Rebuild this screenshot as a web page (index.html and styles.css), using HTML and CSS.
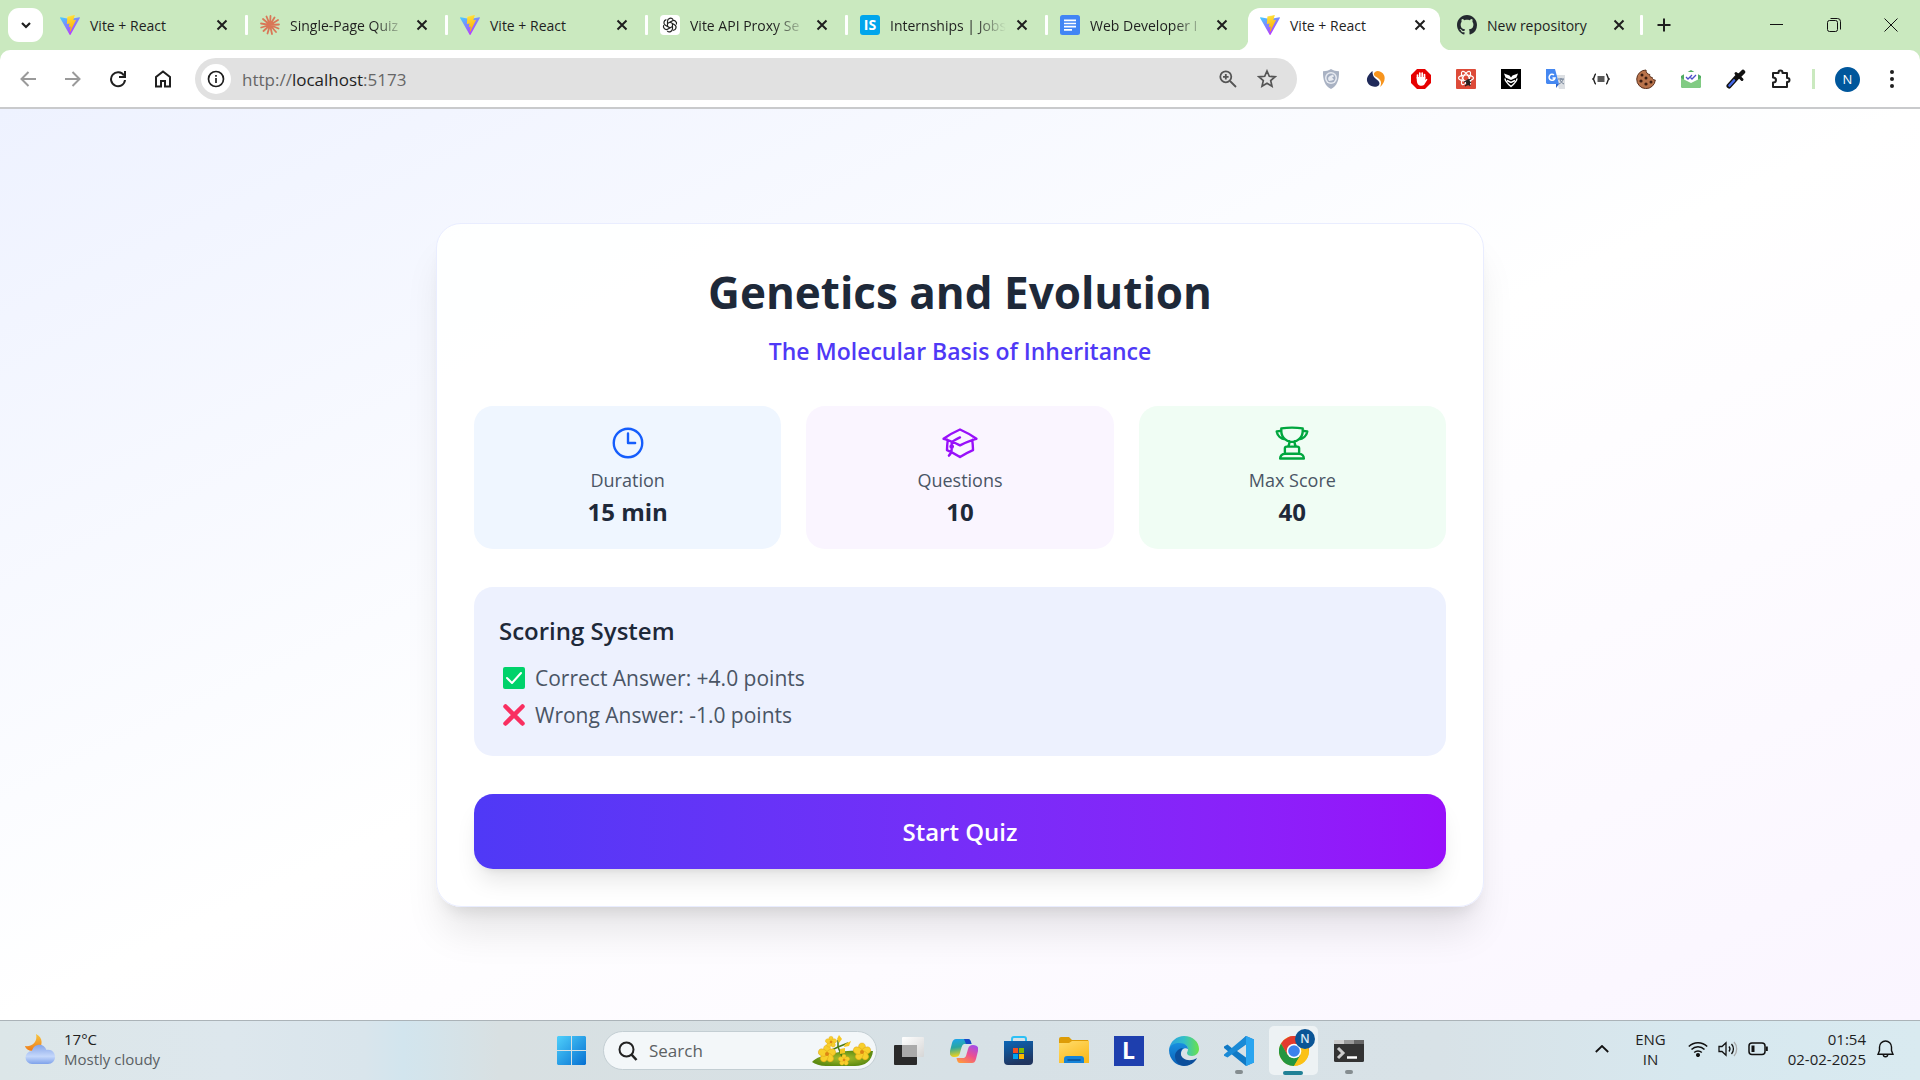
FILE: index.html
```
<!DOCTYPE html>
<html lang="en">
<head>
<meta charset="utf-8">
<meta name="viewport" content="width=device-width, initial-scale=1">
<title>Vite + React</title>
<link rel="stylesheet" href="styles.css">
</head>
<body>
<svg class="defs" aria-hidden="true">
  <defs>
    <linearGradient id="vite-a" x1="0" y1="0" x2=".6" y2="1"><stop offset="0" stop-color="#41d1ff"/><stop offset="1" stop-color="#bd34fe"/></linearGradient>
    <linearGradient id="vite-b" x1=".4" y1="0" x2=".6" y2="1"><stop offset="0" stop-color="#ffea83"/><stop offset=".1" stop-color="#ffdd35"/><stop offset="1" stop-color="#ffa800"/></linearGradient>
    <symbol id="vite" viewBox="0 0 256 257">
      <path fill="url(#vite-a)" d="M255.153 37.938 134.897 252.976c-2.483 4.44-8.862 4.466-11.382.048L.875 37.958c-2.746-4.814 1.371-10.646 6.827-9.67l120.385 21.517a6.537 6.537 0 0 0 2.322-.004l117.867-21.483c5.438-.991 9.574 4.796 6.877 9.62Z"/>
      <path fill="url(#vite-b)" d="M185.432.063 96.44 17.501a3.268 3.268 0 0 0-2.634 3.014l-5.474 92.456a3.268 3.268 0 0 0 3.997 3.378l24.777-5.718c2.318-.535 4.413 1.507 3.936 3.838l-7.361 36.047c-.495 2.426 1.782 4.5 4.151 3.78l15.304-4.649c2.372-.72 4.652 1.36 4.15 3.788l-11.698 56.621c-.732 3.542 3.979 5.473 5.943 2.437l1.313-2.028 72.516-144.72c1.215-2.423-.88-5.186-3.54-4.672l-25.505 4.922c-2.396.462-4.435-1.77-3.759-4.114l16.646-57.705c.677-2.35-1.37-4.583-3.769-4.113Z"/>
    </symbol>
    <symbol id="close" viewBox="0 0 12 12"><path d="M1.5 1.5l9 9M10.500 1.500l-9 9" fill="none" stroke="#1f1f1f" stroke-width="2"/></symbol>
  </defs>
</svg>

<header class="browser">
  <div class="tab-strip">
    <button class="tab-search" aria-label="Search tabs"><svg width="12" height="12" viewBox="0 0 12 12"><path d="M2 4l4 4 4-4" fill="none" stroke="#1f1f1f" stroke-width="2.200"/></svg></button>
    <div class="tab"><svg class="favicon"><use href="#vite"/></svg><span class="tab-title">Vite + React</span><button class="tab-close" aria-label="Close tab"><svg width="12" height="12"><use href="#close"/></svg></button></div>
    <div class="tab"><svg class="favicon" viewBox="0 0 20 20"><g stroke="#d97757" stroke-width="1.800" stroke-linecap="round"><path d="M10 10L10.500 1M10 10l4.500-7.500M10 10l8-5M10 10l9-.5M10 10l8.500 3.500M10 10l6 7M10 10l2 9M10 10l-2.500 8.500M10 10l-6.500 6M10 10l-8.800 2.500M10 10L1 8.500M10 10L3 4M10 10L6.500 1.500"/></g></svg><span class="tab-title faded">Single-Page Quiz</span><button class="tab-close" aria-label="Close tab"><svg width="12" height="12"><use href="#close"/></svg></button></div>
    <div class="tab"><svg class="favicon"><use href="#vite"/></svg><span class="tab-title">Vite + React</span><button class="tab-close" aria-label="Close tab"><svg width="12" height="12"><use href="#close"/></svg></button></div>
    <div class="tab"><svg class="favicon" viewBox="0 0 20 20"><rect width="20" height="20" rx="4" fill="#fff"/><g fill="none" stroke="#222" stroke-width="1.200"><path d="M7.500 11.500V6.200a3 3 0 0 1 5.600-1.500M7.500 8.600l4.600-2.700a3 3 0 0 1 4.300 3.600"/><path d="M7.500 11.500V6.200a3 3 0 0 1 5.600-1.500M7.500 8.600l4.600-2.700a3 3 0 0 1 4.300 3.600" transform="rotate(120 10 10)"/><path d="M7.500 11.500V6.200a3 3 0 0 1 5.600-1.500M7.500 8.600l4.600-2.700a3 3 0 0 1 4.300 3.600" transform="rotate(240 10 10)"/></g></svg><span class="tab-title faded">Vite API Proxy Se</span><button class="tab-close" aria-label="Close tab"><svg width="12" height="12"><use href="#close"/></svg></button></div>
    <div class="tab"><span class="favicon favicon-is">IS</span><span class="tab-title faded">Internships | Jobs</span><button class="tab-close" aria-label="Close tab"><svg width="12" height="12"><use href="#close"/></svg></button></div>
    <div class="tab no-line"><svg class="favicon" viewBox="0 0 20 20"><rect width="20" height="20" rx="2.500" fill="#4285f4"/><path d="M4 5.300h12M4 8.500h12M4 11.700h12M4 14.900h8" stroke="#fff" stroke-width="1.700"/></svg><span class="tab-title faded">Web Developer I</span><button class="tab-close" aria-label="Close tab"><svg width="12" height="12"><use href="#close"/></svg></button></div>
    <div class="tab active"><svg class="favicon"><use href="#vite"/></svg><span class="tab-title">Vite + React</span><button class="tab-close" aria-label="Close tab"><svg width="12" height="12"><use href="#close"/></svg></button></div>
    <div class="tab last"><svg class="favicon" viewBox="0 0 16 16"><path fill="#24292f" d="M8 0C3.580 0 0 3.580 0 8c0 3.540 2.290 6.530 5.470 7.590.4.070.55-.17.55-.38 0-.19-.01-.82-.01-1.490-2.010.37-2.530-.49-2.690-.94-.09-.23-.48-.94-.82-1.130-.28-.15-.68-.52-.01-.53.63-.01 1.080.58 1.230.82.72 1.210 1.870.87 2.330.66.070-.52.28-.87.51-1.070-1.780-.2-3.640-.89-3.640-3.950 0-.87.31-1.590.82-2.150-.08-.2-.36-1.020.08-2.120 0 0 .67-.21 2.200.82.64-.18 1.320-.27 2-.27s1.360.09 2 .27c1.530-1.040 2.200-.82 2.200-.82.44 1.100.16 1.920.08 2.120.51.56.82 1.270.82 2.150 0 3.070-1.870 3.750-3.650 3.950.29.25.54.73.54 1.480 0 1.070-.01 1.930-.01 2.200 0 .21.15.46.55.38A8.010 8.010 0 0 0 16 8c0-4.420-3.580-8-8-8z"/></svg><span class="tab-title">New repository</span><button class="tab-close" aria-label="Close tab"><svg width="12" height="12"><use href="#close"/></svg></button></div>
    <button class="new-tab" aria-label="New tab"><svg width="14" height="14"><path d="M7 0.500v13M.5 7h13" stroke="#1f1f1f" stroke-width="2"/></svg></button>
    <div class="window-controls">
      <button aria-label="Minimise"><svg width="14" height="14"><path d="M0 6.500h13" stroke="#111"/></svg></button>
      <button aria-label="Restore"><svg width="14" height="14" fill="none" stroke="#111"><rect x=".5" y="2.500" width="10" height="11" rx="2"/><path d="M3.500 .5h7a3 3 0 0 1 3 3v8"/></svg></button>
      <button aria-label="Close"><svg width="14" height="14"><path d="M.5.5l13 13M13.500.5l-13 13" stroke="#111"/></svg></button>
    </div>
  </div>

  <div class="toolbar">
    <nav class="nav-buttons" aria-label="Navigation">
      <button aria-label="Back"><svg width="16" height="16" fill="none" stroke="#9a9a9a" stroke-width="2"><path d="M16 8H2M8.500 1L1.500 8l7 7"/></svg></button>
      <button aria-label="Forward"><svg width="16" height="16" fill="none" stroke="#9a9a9a" stroke-width="2"><path d="M0 8h14M7.500 1l7 7-7 7"/></svg></button>
      <button aria-label="Reload"><svg width="18" height="18" fill="none" stroke="#1f1f1f" stroke-width="2"><path d="M15 5.500A7 7 0 1 0 16 10"/><path d="M16 1v6h-6"/></svg></button>
      <button aria-label="Home"><svg width="18" height="18" fill="none" stroke="#1f1f1f" stroke-width="2"><path d="M2 16.500V7l7-5.500L16 7v9.500h-5V11H7v5.500z"/></svg></button>
    </nav>
    <div class="omnibox">
      <button class="site-info" aria-label="Site information"><svg width="18" height="18" fill="none" stroke="#1f1f1f" stroke-width="1.700"><circle cx="9" cy="9" r="7.500"/><path d="M9 8v5M9 5v1.800"/></svg></button>
      <a class="url" href="http://localhost:5173">http://<span>localhost</span>:5173</a>
      <button aria-label="Zoom"><svg width="18" height="18" fill="none" stroke="#555" stroke-width="1.800"><circle cx="6.800" cy="6.800" r="5.500"/><path d="M11 11l6 6M6.800 4v5.600M4 6.800h5.600"/></svg></button>
      <button aria-label="Bookmark"><svg width="20" height="20" fill="none" stroke="#555" stroke-width="1.700"><path d="M10 2l2.300 5.300 5.700.5-4.300 3.800 1.300 5.700-5-3-5 3 1.300-5.700L2 7.800l5.700-.5z"/></svg></button>
    </div>
    <div class="extensions">
      <button aria-label="Privacy shield"><svg width="20" height="20"><path d="M10 0c2.500 1.600 5 2.200 8 2.200C18.300 11 16 17 10 20 4 17 1.700 11 2 2.200 5 2.200 7.500 1.600 10 0z" fill="#a9b2c3"/><circle cx="10" cy="9" r="6" fill="#e8ebf1"/><circle cx="10" cy="9" r="4.500" fill="#a3adc0"/><path d="M8 12c-2-3 0-5 2-5.500l2-1 1 2-2 1 2 2-2 1z" fill="#e8ebf1"/></svg></button>
      <button aria-label="Traffic insights"><svg width="20" height="20"><path d="M6.500 2C3 5-1.500 10 2.500 15c3 3.500 9 3.500 10.500 1 1.500-3-1-4.500-3.500-6.500S6.500 5 6.500 2z" fill="#1f2a5a"/><path d="M8 4.500C9 1 14 1 17 4.500c3.500 4.500 1 10-3 13.500 2-4 1-6.500-1.500-8.500S7.300 7 8 4.500z" fill="#f7941d"/></svg></button>
      <button aria-label="Ad blocker"><svg width="20" height="20"><path d="M6 0h8l6 6v8l-6 6H6l-6-6V6z" fill="#e60000"/><path d="M6.500 9V6M8.800 8V4.200M11.200 8V4M13.500 9V5.500" stroke="#fff" stroke-width="1.700" stroke-linecap="round"/><path d="M5.700 8h8.600v3l1.200-1.200 1 .8-3.500 5.400c-1.500 1.200-4.500 1-6-.5-1.300-1.500-1.300-4.500-1.300-7.500z" fill="#fff"/></svg></button>
      <button aria-label="React inspector"><svg width="20" height="20"><rect width="20" height="20" rx="1" fill="#dd4b39"/><g fill="none" stroke="#fff" stroke-width="1.200"><ellipse cx="10" cy="9" rx="7.500" ry="3"/><ellipse cx="10" cy="9" rx="7.500" ry="3" transform="rotate(60 10 9)"/><ellipse cx="10" cy="9" rx="7.500" ry="3" transform="rotate(120 10 9)"/></g><path d="M8 13l7-3M9 17l6-4M12 10l2 7" stroke="#222" stroke-width="1.200"/><ellipse cx="12" cy="13.500" rx="2" ry="3" fill="#222"/></svg></button>
      <button aria-label="Owl"><svg width="20" height="20"><path fill="#000" d="M0 0h20v20H0z"/><path d="M3 4.500l5.500 2L10 8.500l1.500-2 5.500-2-1.500 4L10 11 4.500 8.500z" fill="#fff"/><path d="M4 9.500c0 3 3 5.500 6 8 3-2.500 6-5 6-8M6 11.500l4 2 4-2" fill="none" stroke="#fff" stroke-width="1.400"/></svg></button>
      <button aria-label="Translate"><svg width="20" height="20"><path d="M9 6h10v14h-6z" fill="#dcdfe3"/><path d="M12 10h6M15 9v2M17 10c0 2-2 4-4 5M14 11c1 2 2 3 4 4" fill="none" stroke="#718096"/><path d="M0 0h9l4 15H1l-1-1z" fill="#4688f1"/><path d="M10 15h3l-3 4z" fill="#2c62c8"/><path d="M8 6a3 3 0 1 0 1 3H6.500" fill="none" stroke="#fff" stroke-width="1.500"/></svg></button>
      <button aria-label="JSON formatter"><svg width="18" height="12" fill="none" stroke="#222" stroke-width="1.400"><path d="M4 1C2 1 3 5 1 6c2 1 1 5 3 5M14 1c2 0 1 4 3 5-2 1-1 5-3 5M5.500 4h7M5.500 6h7M5.500 8h7"/></svg></button>
      <button aria-label="Cookie editor"><svg width="20" height="20"><path d="M10 1a9.300 9.300 0 1 0 9.300 10c-2 .3-3-1-3-2.500-2 0-3-1.500-2.500-3C11 5.500 10 3 10 1z" fill="#b9734b" stroke="#5a2f1c"/><g fill="#3a1c12"><circle cx="6" cy="6" r="1.500"/><circle cx="5" cy="12" r="1.600"/><circle cx="10" cy="9" r="1.500"/><circle cx="10" cy="15" r="1.600"/><circle cx="15" cy="13" r="1.500"/></g></svg></button>
      <button aria-label="Mail tracker"><svg width="20" height="20"><path d="M0 7l10-6 10 6v10a2 2 0 0 1-2 2H2a2 2 0 0 1-2-2z" fill="#50ad62"/><path d="M3 3h14v11H3z" fill="#fff"/><path d="M0 9l10 5 10-5v8a2 2 0 0 1-2 2H2a2 2 0 0 1-2-2z" fill="#81cb83"/><path d="M5 8l2 2 4-4M9 8l2 2 4-4" fill="none" stroke="#4b4fc9" stroke-width="1.300"/></svg></button>
      <button aria-label="Colour picker"><svg width="20" height="20"><path d="M3 17L12 7" stroke="#111" stroke-width="5" stroke-linecap="round"/><path d="M3.500 16.500L8 11.500" stroke="#4468e8" stroke-width="2.600" stroke-linecap="round"/><path d="M10 4.500l6 6" stroke="#111" stroke-width="3" stroke-linecap="round"/><path d="M13.500 6.500L17 3" stroke="#111" stroke-width="4.500" stroke-linecap="round"/></svg></button>
      <button aria-label="Extensions"><svg width="20" height="20" fill="none" stroke="#1f1f1f" stroke-width="2"><path d="M2 4h5.500V3.500a2 2 0 0 1 4 0V4H16v5h.5a2 2 0 0 1 0 4H16v5H2v-4.500c4 0 4-5 0-5z" stroke-linejoin="round"/></svg></button>
    </div>
    <span class="divider"></span>
    <button class="avatar" aria-label="Profile">N</button>
    <button class="menu" aria-label="Menu"><svg width="4" height="18" fill="#1f1f1f"><circle cx="2" cy="2" r="2"/><circle cx="2" cy="9" r="2"/><circle cx="2" cy="16" r="2"/></svg></button>
  </div>
</header>

<main class="page">
  <section class="card">
    <h1>Genetics and Evolution</h1>
    <p class="topic">The Molecular Basis of Inheritance</p>
    <div class="stats">
      <div class="stat stat-blue">
        <svg viewBox="0 0 24 24"><path d="M12 6v6h4.500m4.500 0a9 9 0 1 1-18 0 9 9 0 0 1 18 0Z"/></svg>
        <p class="stat-label">Duration</p><p class="stat-value">15 min</p>
      </div>
      <div class="stat stat-purple">
        <svg viewBox="0 0 24 24"><path d="M4.260 10.147a60.438 60.438 0 0 0-.491 6.347A48.620 48.620 0 0 1 12 20.904a48.620 48.620 0 0 1 8.232-4.410 60.460 60.460 0 0 0-.491-6.347m-15.482 0a50.636 50.636 0 0 0-2.658-.813A59.906 59.906 0 0 1 12 3.493a59.903 59.903 0 0 1 10.399 5.840c-.896.248-1.783.52-2.658.814m-15.482 0A50.717 50.717 0 0 1 12 13.489a50.702 50.702 0 0 1 7.740-3.342M6.750 15a.75.75 0 1 0 0-1.500.75.75 0 0 0 0 1.500Zm0 0v-3.675A55.378 55.378 0 0 1 12 8.443m-7.007 11.550A5.981 5.981 0 0 0 6.750 15.750v-1.500"/></svg>
        <p class="stat-label">Questions</p><p class="stat-value">10</p>
      </div>
      <div class="stat stat-green">
        <svg viewBox="0 0 24 24"><path d="M16.500 18.750h-9m9 0a3 3 0 0 1 3 3h-15a3 3 0 0 1 3-3m9 0v-3.375c0-.621-.503-1.125-1.125-1.125h-.871M7.500 18.750v-3.375c0-.621.504-1.125 1.125-1.125h.872m5.007 0H9.497m5.007 0a7.454 7.454 0 0 1-.982-3.172M9.497 14.250a7.454 7.454 0 0 0 .981-3.172M5.250 4.236c-.982.143-1.954.317-2.916.52A6.003 6.003 0 0 0 7.730 9.728M5.250 4.236V4.500c0 2.108.966 3.990 2.480 5.228M5.250 4.236V2.721C7.456 2.410 9.710 2.250 12 2.250c2.291 0 4.545.16 6.750.47v1.516M7.730 9.728a6.726 6.726 0 0 0 2.748 1.350m8.272-6.842V4.500c0 2.108-.966 3.990-2.480 5.228m2.480-5.492a46.320 46.320 0 0 1 2.916.52 6.003 6.003 0 0 1-5.395 4.972m0 0a6.726 6.726 0 0 1-2.749 1.350m0 0a6.772 6.772 0 0 1-3.044 0"/></svg>
        <p class="stat-label">Max Score</p><p class="stat-value">40</p>
      </div>
    </div>
    <div class="scoring">
      <h2>Scoring System</h2>
      <ul>
        <li><svg viewBox="0 0 22 22"><rect width="22" height="22" rx="2" fill="#00d26a"/><path d="M4 11l5 5 9-10" fill="none" stroke="#fff" stroke-width="2" stroke-linecap="round" stroke-linejoin="round"/></svg>Correct Answer: +4.0 points</li>
        <li><svg viewBox="0 0 22 22"><path d="M2.500 2.500l17 17M19.500 2.500l-17 17" fill="none" stroke="#f92f60" stroke-width="4.500" stroke-linecap="round"/></svg>Wrong Answer: -1.0 points</li>
      </ul>
    </div>
    <button class="start">Start Quiz</button>
  </section>
</main>

<footer class="taskbar">
  <button class="weather">
    <svg width="30" height="30"><defs><linearGradient id="cloud" x2="0" y2="1"><stop offset="0" stop-color="#86a5e8"/><stop offset=".6" stop-color="#c5d8fb"/><stop offset="1" stop-color="#7fa2ea"/></linearGradient><linearGradient id="moon" x2="0" y2="1"><stop offset="0" stop-color="#f8c63d"/><stop offset="1" stop-color="#ee7c1b"/></linearGradient></defs><path d="M11 0c7 3 8 13 0 16-5 2-10 0-11-4 7 1 13-4 11-12z" fill="url(#moon)"/><path d="M7 30a6.500 6.500 0 0 1 0-13C9 9 19 9 21.500 16 27 15 30 19 30 23c0 4-3 7-7 7z" fill="url(#cloud)"/></svg>
    <span class="two-line"><span>17°C</span><span class="muted">Mostly cloudy</span></span>
  </button>

  <div class="apps">
    <button class="app" aria-label="Start"><svg width="29" height="29"><defs><linearGradient id="win" x2="1" y2="1"><stop offset="0" stop-color="#4fd0fb"/><stop offset="1" stop-color="#0670d2"/></linearGradient></defs><path fill="url(#win)" d="M1 0h13v14H0V1zM15 0h13l1 1v13H15zM0 15h14v14H1l-1-1zM15 15h14v13l-1 1H15z"/></svg></button>
    <label class="search">
      <svg width="20" height="20" fill="none" stroke="#222" stroke-width="2"><circle cx="8.500" cy="8.500" r="7"/><path d="M13.500 13.500L18.500 19" stroke-width="2.600"/></svg>
      <input type="search" placeholder="Search" aria-label="Search">
      <svg width="61" height="32"><defs><radialGradient id="leaf"><stop offset="0" stop-color="#a9bf2e"/><stop offset="1" stop-color="#5e8c12"/></radialGradient><g id="bloom" fill="#f8cf2b" stroke="#d99a10" stroke-width=".4"><ellipse cx="0" cy="-4.500" rx="3.500" ry="4.500"/><ellipse cx="0" cy="-4.500" rx="3.500" ry="4.500" transform="rotate(72)"/><ellipse cx="0" cy="-4.500" rx="3.500" ry="4.500" transform="rotate(144)"/><ellipse cx="0" cy="-4.500" rx="3.500" ry="4.500" transform="rotate(216)"/><ellipse cx="0" cy="-4.500" rx="3.500" ry="4.500" transform="rotate(288)"/><circle r="2" fill="#dd8614" stroke="none"/></g></defs><path d="M0 27c5-5 10-6 18-8 14-4 28-4 43-3-1 10-8 15-18 15H14C8 31 3 29 0 27z" fill="url(#leaf)"/><path d="M14 18l12-6 10-4M26 12l5 12M26 12V5" fill="none" stroke="#4c7a12" stroke-width="1.500"/><use href="#bloom" x="15" y="19"/><use href="#bloom" x="50" y="17"/><use href="#bloom" transform="translate(19 7) scale(.65)"/><use href="#bloom" transform="translate(32 25) scale(.65)"/><path d="M27 0l3 4-3 4-2-4zM33 9l6-3-2 5-5 1zM28 14l5-1v5l-5 1z" fill="#f5c722"/></svg>
    </label>
    <button class="app" aria-label="Task view"><svg width="30" height="28"><defs><linearGradient id="tv" x2="1" y2="1"><stop offset="0" stop-color="#fff"/><stop offset="1" stop-color="#d6d6d6"/></linearGradient></defs><rect y="8" width="23" height="20" rx="1" fill="#2a2a2a"/><rect x="8" width="22" height="20" rx="1" fill="url(#tv)"/><path d="M8 8h15v12H8z" fill="#aaa"/></svg></button>
    <button class="app" aria-label="Copilot"><svg width="28" height="26"><defs><linearGradient id="cp1" x2=".2" y2="1"><stop offset="0" stop-color="#1ba4f2"/><stop offset=".5" stop-color="#2aa6a0"/><stop offset="1" stop-color="#f2d31b"/></linearGradient><linearGradient id="cp2" x1=".8" x2=".2" y2="1"><stop offset="0" stop-color="#a34be8"/><stop offset=".5" stop-color="#ee4f8e"/><stop offset="1" stop-color="#ff9a3c"/></linearGradient></defs><path d="M6 1h12c2 0 3 2 3.500 5H15c-3 0-3 2-5 9-1 3-2 4-5 4-4 0-6-2-5-6l2-8c1-3 2-4 4-4z" fill="url(#cp1)"/><path d="M14 1h4c2 0 3 2 3.500 5H16z" fill="#1747c8"/><path d="M22 25H10c-2 0-3-2-3.500-5H13c3 0 3-2 5-9 1-3 2-4 5-4 4 0 6 2 5 6l-2 8c-1 3-2 4-4 4z" fill="url(#cp2)"/></svg></button>
    <button class="app" aria-label="Store"><svg width="30" height="30"><defs><linearGradient id="st" x2=".3" y2="1"><stop offset="0" stop-color="#0a66b7"/><stop offset="1" stop-color="#20355f"/></linearGradient></defs><path d="M8 6V3a2 2 0 0 1 2-2h10a2 2 0 0 1 2 2v3" fill="none" stroke="#2dc0f5" stroke-width="2"/><path d="M0 5h29v20a4 4 0 0 1-4 4H4a4 4 0 0 1-4-4z" fill="url(#st)"/><path fill="#f25022" d="M9 12h5v5H9z"/><path fill="#7fba00" d="M15 12h5v5h-5z"/><path fill="#00a4ef" d="M9 18h5v5H9z"/><path fill="#ffb900" d="M15 18h5v5h-5z"/></svg></button>
    <button class="app" aria-label="File Explorer"><svg width="30" height="28"><defs><linearGradient id="fo" x2=".6" y2="1"><stop offset="0" stop-color="#ffdc6b"/><stop offset="1" stop-color="#fbbb20"/></linearGradient></defs><path d="M0 2a2 2 0 0 1 2-2h8l3 3h16l1 2v6H0z" fill="#dd9c07"/><path d="M0 6h10l3-2h17v22H0z" fill="url(#fo)"/><path d="M5 26v-4a3 3 0 0 1 3-3h14a3 3 0 0 1 3 3v4z" fill="#1583d8"/><path d="M9 23h12" stroke="#0a4f93" stroke-width="1.500" stroke-linecap="round"/></svg></button>
    <button class="app" aria-label="L"><span class="app-l">L</span></button>
    <button class="app" aria-label="Edge"><svg width="30" height="30"><defs><linearGradient id="e1" x2="1"><stop offset="0" stop-color="#2a9fe0"/><stop offset=".5" stop-color="#33bfc8"/><stop offset="1" stop-color="#6ae24b"/></linearGradient><linearGradient id="e2" x2="0" y2="1"><stop offset="0" stop-color="#178fe0"/><stop offset="1" stop-color="#0b5fb5"/></linearGradient></defs><path d="M0 14C1 5 8 0 15 0c9 0 15 6 15 13 0 4-3 7-7 7-3 0-5-1-5-3 0-1 1-2 1-4 0-3-3-5-7-5-6 0-11 3-12 6z" fill="url(#e1)"/><path d="M0 14c1-5 5-7 10-7 6 0 9 3 9 6-3-2-7 0-7 5 0 6 5 10 12 8-6 6-15 4-19 0-3-3-5-7-5-12z" fill="url(#e2)"/><path d="M14 12c-3 3-3 8 0 10 4 3 9 3 14 0-2 5-8 8-13 8-6-1-9-5-9-10 0-4 4-8 8-8z" fill="#0c4f9c"/></svg></button>
    <button class="app running" aria-label="Visual Studio Code"><svg width="30" height="30"><path d="M22 0L9 13 3.500 8.500 0 10.500v1.500L22 30l8-3.500V3.500z" fill="#1079c5"/><path d="M22 0L0 18.500v1.300l3.500 1.700L22 8z" fill="#1a8ad6"/><path d="M22 0l8 3.500v23L22 30z" fill="#2aa5f0"/><path d="M22 8.500v13L13 15z" fill="#d8e2e7"/></svg></button>
    <button class="app running selected" aria-label="Chrome"><svg width="30" height="30"><circle cx="15" cy="15" r="15" fill="#fbc116"/><path d="M15 15H30A15 15 0 0 0 2 7.500L8.500 19z" fill="#e33b2e"/><path d="M2 7.500A15 15 0 0 0 15 30l6.500-11.300L15 15l-6.500 3.700z" fill="#24963f"/><path d="M15 8h13.200A15 15 0 0 1 15 30l7-11z" fill="#fbc116"/><circle cx="15" cy="15" r="7.300" fill="#fff"/><circle cx="15" cy="15" r="5.800" fill="#3b82ec"/></svg><span class="badge">N</span></button>
    <button class="app running" aria-label="Terminal"><svg width="30" height="22"><rect width="30" height="22" rx="1.500" fill="#333"/><path d="M0 0h20v4H0z" fill="#999"/><path d="M0 0h10v4H0z" fill="#ccc"/><path d="M20 0h10v4H20z" fill="#666"/><path d="M4 8l5 5-5 5" fill="none" stroke="#ccc" stroke-width="3"/><path d="M13 17.500h10" stroke="#fff" stroke-width="2.500"/></svg></button>
  </div>

  <div class="tray">
    <button class="chevron" aria-label="Show hidden icons"><svg width="14" height="8"><path d="M.8 7L7 1l6.200 6" fill="none" stroke="#111" stroke-width="1.800"/></svg></button>
    <button class="two-line lang"><span>ENG</span><span>IN</span></button>
    <button class="quick" aria-label="Network, volume and battery">
      <svg width="20" height="16" fill="none" stroke="#111" stroke-width="1.500"><path d="M.8 5.500a13 13 0 0 1 18.400 0M3.500 8.600a9 9 0 0 1 13 0M6.200 11.500a5.500 5.500 0 0 1 7.600 0"/><circle cx="10" cy="14" r="1.300" fill="#111"/></svg>
      <svg width="20" height="16" fill="none" stroke="#111" stroke-width="1.300"><path d="M1 5.500v5h3l4 3.800V1.700l-4 3.800zM11 5.500a4 4 0 0 1 0 5M13.500 3a7.500 7.500 0 0 1 0 10"/><path d="M16 1a10.500 10.500 0 0 1 0 14" stroke="#aaa"/></svg>
      <svg width="20" height="14" fill="none" stroke="#111" stroke-width="1.500"><rect x="1" y="1" width="16" height="11.500" rx="3"/><path d="M3.500 3.500h3v6.500h-3z" fill="#111" stroke="none"/><path d="M18.800 4.500v4.500" stroke-width="2"/></svg>
    </button>
    <button class="two-line clock"><span>01:54</span><span>02-02-2025</span></button>
    <button class="bell" aria-label="Notifications"><svg width="17" height="18" fill="none" stroke="#111" stroke-width="1.400"><path d="M2.500 10.500V7a6 6 0 0 1 12 0v3.500l1.500 3.800H1zM6.300 14.500a2.200 2.200 0 0 0 4.400 0"/></svg></button>
  </div>
</footer>
</body>
</html>
```
FILE: styles.css
```
* {
  box-sizing: border-box;
}

body {
  margin: 0;
  min-height: 100vh;
  display: flex;
  flex-direction: column;
  font-family: "Open Sans", "Noto Sans", sans-serif;
  color: #1f1f1f;
}

h1, h2, p, ul {
  margin: 0;
  padding: 0;
}

button {
  border: 0;
  padding: 0;
  margin: 0;
  background: none;
  font: inherit;
  color: inherit;
  display: flex;
  align-items: center;
  justify-content: center;
}

svg {
  display: block;
  flex: none;
}

.defs {
  position: absolute;
  width: 0;
  height: 0;
}

/* Browser chrome */
.browser {
  background: #cae9bf;
}

.tab-strip {
  display: flex;
  height: 50px;
  padding: 8px 1px 0 8px;
}

.tab-search {
  width: 35px;
  height: 34px;
  border-radius: 11px;
  background: #fff;
  margin-right: 5px;
}

.tab {
  display: flex;
  align-items: center;
  width: 200px;
  height: 34px;
  padding: 0 20px 0 12px;
  position: relative;
}

.tab::after {
  content: "";
  position: absolute;
  right: 0;
  top: 7px;
  width: 3px;
  height: 20px;
  border-radius: 1px;
  background: #fff;
}

.tab.no-line::after {
  display: none;
}

.tab.active {
  width: 192px;
  height: 42px;
  padding: 0 14px 8px 12px;
  background: #fff;
  border-radius: 12px 12px 0 0;
}

.tab.active::before,
.tab.active::after {
  content: "";
  position: absolute;
  top: auto;
  bottom: 0;
  width: 12px;
  height: 12px;
  border-radius: 0;
  background: radial-gradient(circle at 0 0, transparent 12px, #fff 13px);
}

.tab.active::before {
  left: -12px;
}

.tab.active::after {
  right: -12px;
  transform: scaleX(-1);
}

.tab.last {
  width: 198px;
  margin-left: 5px;
  padding-right: 18px;
}

.favicon {
  width: 20px;
  height: 20px;
  flex: none;
}

.favicon-is {
  border-radius: 3px;
  background: #00a5ec;
  color: #fff;
  font-size: 14px;
  font-weight: 700;
  line-height: 20px;
  text-align: center;
}

.tab-title {
  flex: 1;
  margin: 0 4px 0 10px;
  white-space: nowrap;
  font-size: 14px;
}

.tab-title.faded {
  mask-image: linear-gradient(to right, #000 84px, transparent 116px);
}

.tab-close {
  width: 12px;
  height: 12px;
}

.new-tab {
  width: 42px;
  height: 34px;
}

.window-controls {
  display: flex;
  margin-left: auto;
  height: 34px;
}

.window-controls button {
  width: 57px;
}

.toolbar {
  display: flex;
  align-items: center;
  height: 59px;
  padding: 1px 8px 0 5px;
  background: #fff;
  border-radius: 10px 10px 0 0;
  border-bottom: 2px solid #c9cacc;
}

.nav-buttons,
.extensions {
  display: flex;
}

.nav-buttons button,
.extensions button {
  width: 45px;
  height: 40px;
}

.omnibox {
  flex: 1;
  display: flex;
  align-items: center;
  height: 42px;
  margin: 0 11px 0 10px;
  padding: 0 20px 0 6px;
  border-radius: 21px;
  background: #e1e1e1;
  gap: 20px;
}

.site-info {
  width: 30px;
  height: 30px;
  border-radius: 50%;
  background: #fff;
}

.url {
  flex: 1;
  margin-left: -9px;
  font-size: 17px;
  color: #666;
  text-decoration: none;
}

.url span {
  color: #1f1f1f;
}

.divider {
  width: 3px;
  height: 20px;
  margin: 0 20px 0 9px;
  background: #cae9bf;
}

.avatar {
  width: 25px;
  height: 25px;
  border-radius: 50%;
  background: #00579c;
  color: #fff;
  font-size: 13px;
}

.menu {
  width: 40px;
  height: 40px;
  margin-left: 12px;
}

/* Quiz page */
.page {
  flex: 1;
  display: flex;
  align-items: center;
  justify-content: center;
  padding: 38px;
  background: linear-gradient(to bottom right, #eef2ff, #fff 50%, #faf5ff);
}

.card {
  width: 100%;
  max-width: 1048px;
  padding: 37px;
  border: 1px solid #e9edff;
  border-radius: 25px;
  background: rgba(255, 255, 255, .9);
  box-shadow: 0 31px 39px -8px rgba(0, 0, 0, .1), 0 12px 16px -9px rgba(0, 0, 0, .1);
  color: #1e2939;
}

h1 {
  font-size: 44px;
  line-height: 62px;
  font-weight: 700;
  text-align: center;
}

.topic {
  margin: 8px 0 35px;
  font-size: 23px;
  line-height: 40px;
  font-weight: 600;
  text-align: center;
  color: #4f39f6;
}

.stats {
  display: grid;
  grid-template-columns: repeat(3, 1fr);
  gap: 25px;
}

.stat {
  display: flex;
  flex-direction: column;
  align-items: center;
  padding: 18px 18px 19px;
  border-radius: 19px;
}

.stat svg {
  width: 38px;
  height: 38px;
  fill: none;
  stroke: currentColor;
  stroke-width: 1.5;
  stroke-linecap: round;
  stroke-linejoin: round;
}

.stat-blue {
  background: #eff6ff;
  color: #155dfc;
}

.stat-purple {
  background: #faf5ff;
  color: #9810fa;
}

.stat-green {
  background: #f0fdf4;
  color: #00a63e;
}

.stat-label {
  margin-top: 5px;
  font-size: 18px;
  line-height: 27px;
  color: #4a5565;
}

.stat-value {
  font-size: 24px;
  line-height: 36px;
  font-weight: 700;
  color: #1e2939;
}

.scoring {
  margin: 38px 0;
  padding: 25px;
  border-radius: 19px;
  background: #edf1fe;
}

h2 {
  margin-bottom: 13px;
  font-size: 24px;
  line-height: 38px;
  font-weight: 600;
}

.scoring ul {
  list-style: none;
  display: grid;
  gap: 6px;
}

.scoring li {
  display: flex;
  align-items: center;
  gap: 10px;
  padding-left: 4px;
  font-size: 21px;
  line-height: 31px;
  color: #4a5565;
}

.scoring li svg {
  width: 22px;
  height: 22px;
}

.start {
  width: 100%;
  height: 75px;
  border-radius: 19px;
  background: linear-gradient(to right in oklab, #4f39f6, #9810fa);
  box-shadow: 0 16px 23px -5px rgba(0, 0, 0, .1), 0 6px 9px -6px rgba(0, 0, 0, .1);
  color: #fff;
  font-size: 24px;
  font-weight: 600;
}

/* Taskbar */
.taskbar {
  display: grid;
  grid-template-columns: 1fr auto 1fr;
  height: 60px;
  border-top: 1px solid #abb3b8;
  background: linear-gradient(to right, #dce6e8 0, #dde7ed 12%, #d9e5ec 19%, #d2e5ee 21%, #d8e0e2 26%, #d7e1e6 50%, #d8e2e7 75%, #d7e8ef 88%, #d9eaf0);
  font-size: 15px;
}

.weather {
  justify-self: start;
  padding: 0 0 3px 25px;
  gap: 9px;
}

.two-line {
  display: flex;
  flex-direction: column;
  align-items: flex-start;
  font-size: 15px;
  line-height: 20px;
}

.muted {
  color: #5a6063;
}

.apps {
  display: flex;
  align-items: center;
}

.app {
  position: relative;
  width: 55px;
  height: 59px;
}

.search {
  display: flex;
  align-items: center;
  width: 274px;
  height: 39px;
  margin: 0 4px;
  padding: 0 3px 0 14px;
  border: 1px solid #c3ced3;
  border-radius: 20px;
  background: #f3f7f9;
}

.search input {
  flex: 1;
  min-width: 0;
  margin-left: 11px;
  padding: 0;
  border: 0;
  outline: 0;
  background: none;
  font: 17px "Open Sans", "Noto Sans", sans-serif;
}

.search input::placeholder {
  color: #5c6163;
}

.app-l {
  width: 30px;
  height: 30px;
  background: #1e3fae;
  color: #fff;
  font-size: 23px;
  font-weight: 700;
  line-height: 29px;
}

.running::after {
  content: "";
  position: absolute;
  left: 24px;
  bottom: 6px;
  width: 8px;
  height: 4px;
  border-radius: 2px;
  background: #858d90;
}

.selected {
  width: 49px;
  height: 49px;
  margin: 0 3px;
  border-radius: 5px;
  background: #edf2f4;
}

.selected::after {
  left: 14px;
  bottom: 0;
  width: 20px;
  background: #218196;
}

.badge {
  position: absolute;
  top: 3px;
  right: 3px;
  width: 20px;
  height: 20px;
  border-radius: 50%;
  background: #0b5596;
  color: #dbe9f5;
  font-size: 12px;
  font-weight: 600;
  line-height: 20px;
}

.tray {
  display: flex;
  justify-self: end;
  align-items: center;
  padding: 0 26px 3px 0;
}

.chevron {
  margin-right: 26px;
}

.lang {
  align-items: center;
  margin-right: 22px;
}

.quick {
  gap: 10px;
  margin-right: 20px;
}

.clock {
  align-items: flex-end;
  margin-right: 11px;
}
```
